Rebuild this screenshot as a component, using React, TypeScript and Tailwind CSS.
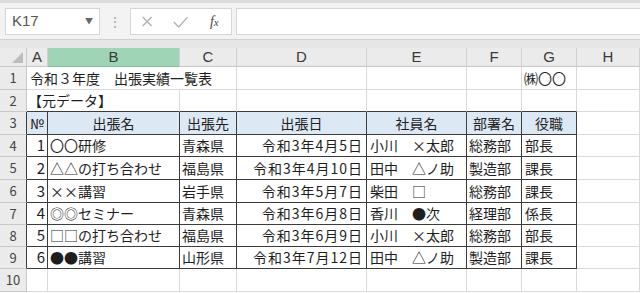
import React from 'react';

const cols = ['A', 'B', 'C', 'D', 'E', 'F', 'G', 'H'];

const rows = [
  { no: '1', name: '〇〇研修', place: '青森県', date: '令和3年4月5日', staff: '小川　×太郎', dept: '総務部', pos: '部長' },
  { no: '2', name: '△△の打ち合わせ', place: '福島県', date: '令和3年4月10日', staff: '田中　△ノ助', dept: '製造部', pos: '課長' },
  { no: '3', name: '××講習', place: '岩手県', date: '令和3年5月7日', staff: '柴田　□', dept: '総務部', pos: '課長' },
  { no: '4', name: '◎◎セミナー', place: '青森県', date: '令和3年6月8日', staff: '香川　●次', dept: '経理部', pos: '係長' },
  { no: '5', name: '□□の打ち合わせ', place: '福島県', date: '令和3年6月9日', staff: '小川　×太郎', dept: '総務部', pos: '部長' },
  { no: '6', name: '●●講習', place: '山形県', date: '令和3年7月12日', staff: '田中　△ノ助', dept: '製造部', pos: '課長' },
];

const rowHeights = ['h-[23px]', 'h-[22px]', 'h-[23px]', 'h-[22px]', 'h-[23px]', 'h-[23px]', 'h-[22px]', 'h-[22px]', 'h-[22px]', 'h-[23px]'];

const font = { fontFamily: '"Noto Sans CJK JP", sans-serif' };

const RowHead: React.FC<{ n: number; h: string }> = ({ n, h }) => (
  <div className={`${h} w-[27px] shrink-0 flex items-center justify-center bg-[#ebebeb] border-r border-b border-[#c8c8c8] text-[13px] text-[#444]`}>
    {n}
  </div>
);

// plain sheet cell (light gridlines)
const Cell: React.FC<{ w: string; children?: React.ReactNode; dark?: boolean; darkBottom?: boolean; className?: string }> = ({ w, children, dark, darkBottom, className }) => {
  let border = 'border-r border-b border-[#dadada]';
  if (dark) border = 'border-r border-b border-[#3c3c3c]';
  else if (darkBottom) border = 'border-r border-r-[#dadada] border-b border-b-[#3c3c3c]';
  return (
    <div className={`${w} shrink-0 h-full flex items-center whitespace-nowrap overflow-visible text-[14px] text-[#1e1e1e] ${border} ${className ?? ''}`}>
      {children}
    </div>
  );
};

export default function App() {
  return (
    <div className="w-[640px] h-[293px] overflow-hidden bg-white select-none" style={font}>
      {/* formula bar */}
      <div className="h-[40px] bg-[#f3f3f3] border-t-[3px] border-[#dcdcdc] border-b border-b-[#d0d0d0] flex items-center gap-0 pl-[5px]">
        <div className="w-[95px] h-[27px] bg-white border border-[#d6d6d6] flex items-center justify-between pl-[6px] pr-[6px]">
          <span className="text-[15px] text-[#555]" style={{ fontFamily: '"Liberation Sans", sans-serif' }}>K17</span>
          <span className="text-[8px] text-[#666]">▼</span>
        </div>
        <div className="w-[30px] flex justify-center text-[#a8a8a8] text-[14px]">⋮</div>
        <div className="w-[102px] h-[27px] bg-white border border-[#d6d6d6] flex items-center">
          <svg width="34" height="27" viewBox="0 0 34 27">
            <path d="M12 9 L21 18 M21 9 L12 18" stroke="#b0b0b0" strokeWidth="1.4" />
          </svg>
          <svg width="34" height="27" viewBox="0 0 34 27">
            <path d="M10 14 L15 19 L24 9" stroke="#b0b0b0" strokeWidth="1.4" fill="none" />
          </svg>
          <span className="w-[34px] text-center text-[14px] italic text-[#444]" style={{ fontFamily: '"Liberation Serif", serif' }}>
            f<span className="text-[11px]">x</span>
          </span>
        </div>
        <div className="ml-[4px] flex-1 h-[27px] bg-white border border-[#d6d6d6] border-r-0" />
      </div>
      <div className="h-[8px] bg-[#e6e6e6]" />

      {/* column headers */}
      <div className="flex h-[19px]">
        <div className="w-[27px] shrink-0 bg-[#ebebeb] border-r border-b border-[#c8c8c8] relative">
          <svg className="absolute right-[3px] bottom-[3px]" width="11" height="11" viewBox="0 0 11 11">
            <path d="M11 0 L11 11 L0 11 Z" fill="#bdbdbd" />
          </svg>
        </div>
        {cols.map((c) => {
          const w =
            c === 'A' ? 'w-[21px]' : c === 'B' ? 'w-[132px]' : c === 'C' ? 'w-[57px]' : c === 'D' ? 'w-[130px]' : c === 'E' ? 'w-[100px]' : c === 'F' ? 'w-[55px]' : c === 'G' ? 'w-[55px]' : 'flex-1';
          const bg = c === 'B' ? 'bg-[#9fd5b6] border-b-[#7fbf9a]' : 'bg-[#ebebeb] border-b-[#c8c8c8]';
          return (
            <div
              key={c}
              className={`${w} shrink-0 flex items-center justify-center border-r border-r-[#d0d0d0] border-b text-[15px] text-[#3a3a3a] ${bg}`}
              style={{ fontFamily: '"Liberation Sans", sans-serif' }}
            >
              {c}
            </div>
          );
        })}
      </div>

      {/* row 1 */}
      <div className={`flex ${rowHeights[0]}`}>
        <RowHead n={1} h={rowHeights[0]} />
        <Cell w="w-[210px]" className="pl-[3px]">令和３年度　出張実績一覧表</Cell>
        <Cell w="w-[130px]" />
        <Cell w="w-[100px]" />
        <Cell w="w-[55px]" />
        <Cell w="w-[55px]" className="pl-[2px] text-[13px]">㈱〇〇</Cell>
        <Cell w="flex-1" />
      </div>

      {/* row 2 */}
      <div className={`flex ${rowHeights[1]}`}>
        <RowHead n={2} h={rowHeights[1]} />
        <Cell w="w-[153px]" darkBottom className="pl-[1px]">【元データ】</Cell>
        <Cell w="w-[57px]" darkBottom />
        <Cell w="w-[130px]" darkBottom />
        <Cell w="w-[100px]" darkBottom />
        <Cell w="w-[55px]" darkBottom />
        <Cell w="w-[55px]" darkBottom />
        <Cell w="flex-1" />
      </div>

      {/* row 3: table header */}
      <div className={`flex ${rowHeights[2]}`}>
        <div className={`${rowHeights[2]} w-[27px] shrink-0 flex items-center justify-center bg-[#ebebeb] border-r border-r-[#3c3c3c] border-b border-b-[#c8c8c8] text-[13px] text-[#444]`}>3</div>
        <Cell w="w-[21px]" dark className="bg-[#dde8f5] justify-center text-[13px]">№</Cell>
        <Cell w="w-[132px]" dark className="bg-[#dde8f5] justify-center">出張名</Cell>
        <Cell w="w-[57px]" dark className="bg-[#dde8f5] justify-center">出張先</Cell>
        <Cell w="w-[130px]" dark className="bg-[#dde8f5] justify-center">出張日</Cell>
        <Cell w="w-[100px]" dark className="bg-[#dde8f5] justify-center">社員名</Cell>
        <Cell w="w-[55px]" dark className="bg-[#dde8f5] justify-center">部署名</Cell>
        <Cell w="w-[55px]" dark className="bg-[#dde8f5] justify-center">役職</Cell>
        <Cell w="flex-1" />
      </div>

      {rows.map((r, i) => (
        <div key={r.no} className={`flex ${rowHeights[i + 3]}`}>
          <div className={`${rowHeights[i + 3]} w-[27px] shrink-0 flex items-center justify-center bg-[#ebebeb] border-r border-r-[#3c3c3c] border-b border-b-[#c8c8c8] text-[13px] text-[#444]`}>
            {i + 4}
          </div>
          <Cell w="w-[21px]" dark className="justify-end pr-[2px] text-[15px]">{r.no}</Cell>
          <Cell w="w-[132px]" dark className="pl-[2px]">{r.name}</Cell>
          <Cell w="w-[57px]" dark className="pl-[2px]">{r.place}</Cell>
          <Cell w="w-[130px]" dark className="justify-end pr-[3px] tracking-[1px]">{r.date}</Cell>
          <Cell w="w-[100px]" dark className="pl-[3px]">{r.staff}</Cell>
          <Cell w="w-[55px]" dark className="pl-[2px]">{r.dept}</Cell>
          <Cell w="w-[55px]" dark className="pl-[3px]">{r.pos}</Cell>
          <Cell w="flex-1" />
        </div>
      ))}

      {/* row 10 */}
      <div className={`flex ${rowHeights[9]}`}>
        <RowHead n={10} h={rowHeights[9]} />
        <Cell w="w-[21px]" />
        <Cell w="w-[132px]" />
        <Cell w="w-[57px]" />
        <Cell w="w-[130px]" />
        <Cell w="w-[100px]" />
        <Cell w="w-[55px]" />
        <Cell w="w-[55px]" />
        <Cell w="flex-1" />
      </div>
    </div>
  );
}
